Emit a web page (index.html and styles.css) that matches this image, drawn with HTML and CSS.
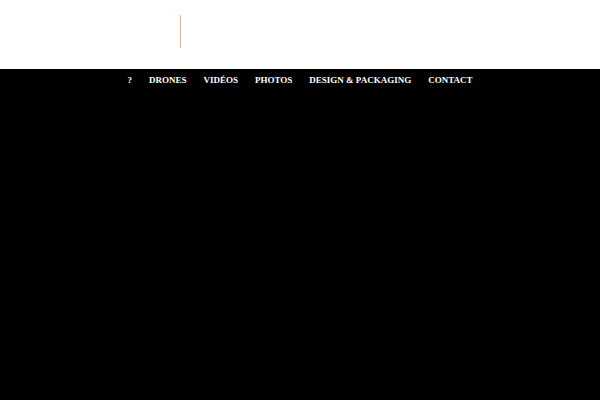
FILE: index.html
```html
<!DOCTYPE html>
<html>
<head>
<meta charset="utf-8">
<link rel="stylesheet" href="styles.css">
</head>
<body>
<header class="top">
  <div class="logo"><span class="stroke"></span></div>
</header>
<nav class="nav">
  <a href="#">?</a>
  <a href="#">DRONES</a>
  <a href="#">VIDÉOS</a>
  <a href="#">PHOTOS</a>
  <a href="#">DESIGN &amp; PACKAGING</a>
  <a href="#">CONTACT</a>
</nav>
<main class="content"></main>
</body>
</html>
```
FILE: styles.css
```css
html, body { margin: 0; padding: 0; height: 100%; }
body { background: #000; font-family: "Liberation Serif", "Times New Roman", serif; display: flex; flex-direction: column; }
.top { background: #fff; height: 69px; display: flex; }
.logo { padding: 15px 0 0 180px; }
.stroke { display: block; width: 1px; height: 33px; background: #cfb3a3; }
.nav { display: flex; justify-content: center; gap: 17px; padding-top: 5px; height: 21px; }
.nav a { color: #fff; text-decoration: none; font-weight: bold; font-size: 9px; line-height: 12px; }
.content { flex: 1; background: #000; }
```
